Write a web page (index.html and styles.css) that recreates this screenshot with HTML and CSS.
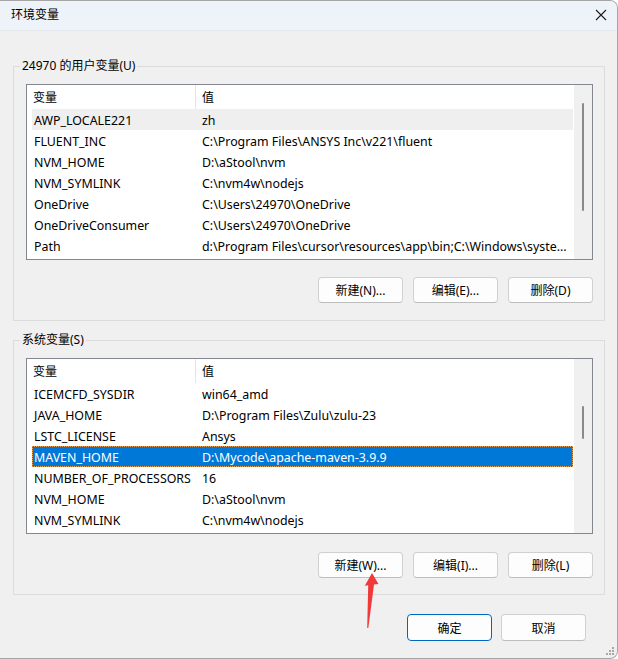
FILE: index.html
```html
<!DOCTYPE html>
<html lang="zh-CN">
<head>
  <meta charset="UTF-8">
  <title>环境变量</title>
  <link rel="stylesheet" href="styles.css">
</head>
<body>

<div class="window">
  <div class="titlebar">
    <span class="title">环境变量</span>
    <svg class="close" width="12" height="12" viewBox="0 0 12 12">
      <path d="M1 1 L11 11 M11 1 L1 11" stroke="#1b1b1b" stroke-width="1.1" fill="none"/>
    </svg>
  </div>

  <fieldset class="group group-user">
    <legend>24970 的用户变量(U)</legend>
    <div class="listview">
      <div class="rows">
        <div class="header">
          <div class="col-name">变量</div>
          <div class="col-value">值</div>
        </div>
        <div class="row hot"><div class="col-name">AWP_LOCALE221</div><div class="col-value">zh</div></div>
        <div class="row"><div class="col-name">FLUENT_INC</div><div class="col-value">C:\Program Files\ANSYS Inc\v221\fluent</div></div>
        <div class="row"><div class="col-name">NVM_HOME</div><div class="col-value">D:\aStool\nvm</div></div>
        <div class="row"><div class="col-name">NVM_SYMLINK</div><div class="col-value">C:\nvm4w\nodejs</div></div>
        <div class="row"><div class="col-name">OneDrive</div><div class="col-value">C:\Users\24970\OneDrive</div></div>
        <div class="row"><div class="col-name">OneDriveConsumer</div><div class="col-value">C:\Users\24970\OneDrive</div></div>
        <div class="row"><div class="col-name">Path</div><div class="col-value">d:\Program Files\cursor\resources\app\bin;C:\Windows\syste...</div></div>
      </div>
      <div class="scrollbar"><div class="thumb thumb-user"></div></div>
    </div>
    <div class="buttons">
      <button class="btn">新建(N)...</button>
      <button class="btn">编辑(E)...</button>
      <button class="btn">删除(D)</button>
    </div>
  </fieldset>

  <fieldset class="group group-system">
    <legend>系统变量(S)</legend>
    <div class="listview">
      <div class="rows">
        <div class="header">
          <div class="col-name">变量</div>
          <div class="col-value">值</div>
        </div>
        <div class="row"><div class="col-name">ICEMCFD_SYSDIR</div><div class="col-value">win64_amd</div></div>
        <div class="row"><div class="col-name">JAVA_HOME</div><div class="col-value">D:\Program Files\Zulu\zulu-23</div></div>
        <div class="row"><div class="col-name">LSTC_LICENSE</div><div class="col-value">Ansys</div></div>
        <div class="row selected"><div class="col-name">MAVEN_HOME</div><div class="col-value">D:\Mycode\apache-maven-3.9.9</div></div>
        <div class="row"><div class="col-name">NUMBER_OF_PROCESSORS</div><div class="col-value">16</div></div>
        <div class="row"><div class="col-name">NVM_HOME</div><div class="col-value">D:\aStool\nvm</div></div>
        <div class="row"><div class="col-name">NVM_SYMLINK</div><div class="col-value">C:\nvm4w\nodejs</div></div>
      </div>
      <div class="scrollbar"><div class="thumb thumb-system"></div></div>
    </div>
    <div class="buttons">
      <button class="btn">新建(W)...</button>
      <button class="btn">编辑(I)...</button>
      <button class="btn">删除(L)</button>
    </div>
  </fieldset>

  <div class="dialog-buttons">
    <button class="btn btn-default">确定</button>
    <button class="btn">取消</button>
  </div>

  <!-- red annotation arrow over the screenshot -->
  <svg class="arrow" width="20" height="60" viewBox="360 570 20 60">
    <polygon points="372,573 378.5,584 374,584.5 368.3,628 367.2,628 368.2,585.2 364.8,585.8" fill="#f03a3a"/>
  </svg>

  <svg class="grip" width="10" height="10" viewBox="0 0 10 10">
    <rect x="7" y="1" width="2" height="2" fill="#a8a8a8"/>
    <rect x="4" y="4" width="2" height="2" fill="#a8a8a8"/>
    <rect x="7" y="4" width="2" height="2" fill="#a8a8a8"/>
    <rect x="1" y="7" width="2" height="2" fill="#a8a8a8"/>
    <rect x="4" y="7" width="2" height="2" fill="#a8a8a8"/>
    <rect x="7" y="7" width="2" height="2" fill="#a8a8a8"/>
  </svg>
</div>

</body>
</html>
```

FILE: styles.css
```css
* {
  box-sizing: border-box;
}

html, body {
  margin: 0;
  padding: 0;
  background: #ffffff;
}

body {
  font-family: "Noto Sans", "Noto Sans CJK SC", sans-serif;
  font-size: 12px;
  color: #000;
}

.window {
  position: relative;
  display: flex;
  flex-direction: column;
  width: 618px;
  height: 659px;
  background: #f0f0f0;
  border: 1px solid #a6a6a6;
  border-left: none;
  border-radius: 0 8px 8px 0;
  overflow: hidden;
}

.titlebar {
  display: flex;
  align-items: center;
  justify-content: space-between;
  height: 30px;
  flex: none;
  padding: 0 10px 0 11px;
  background: #eef3fa;
  border-bottom: 1px solid #e6e9ee;
}

.title {
  line-height: 16px;
  margin-top: -1px;
}

.close {
  margin-top: -1px;
}

/* group boxes */
.group {
  flex: none;
  min-width: 0;
  width: 592px;
  margin: 0 0 0 13px;
  border: 1px solid #dcdcdc;
  padding: 10px 11px 17px 12px;
}

.group legend {
  margin-left: -6px;
  padding: 0 2px;
  line-height: 16px;
}

.group-user {
  margin-top: 27px;
}

.group-system {
  margin-top: 11px;
  padding-bottom: 16px;
}

/* list view */
.listview {
  display: flex;
  height: 176px;
  background: #fff;
  border: 1px solid #828790;
  overflow: hidden;
}

.rows {
  flex: 1;
  min-width: 0;
}

.header,
.row {
  display: flex;
  height: 21px;
  align-items: center;
  white-space: nowrap;
}

.header {
  height: 24px;
}

.header .col-name {
  width: 169px;
  padding-left: 6px;
  border-right: 1px solid #e5e5e5;
  height: 100%;
  display: flex;
  align-items: center;
}

.header .col-value {
  padding-left: 6px;
}

.row {
  margin: 0 1px 0 5px;
  padding-top: 2px;
  font-size: 12.4px;
}

.row .col-name {
  width: 164px;
  padding-left: 2px;
  overflow: hidden;
}

.row .col-value {
  flex: 1;
  padding-left: 6px;
  overflow: hidden;
}

.row.hot {
  background: #efefef;
}

.row.selected {
  background: #0078d7;
  color: #fff;
  border: 1px dotted #e8a35a;
  padding-top: 1px;
}

.row.selected .col-name {
  width: 163px;
  padding-left: 1px;
}

.scrollbar {
  flex: none;
  width: 18px;
  display: flex;
  justify-content: center;
  background: #f0f0f0;
}

.thumb {
  width: 2px;
  border-radius: 1px;
  background: #8a8a8a;
}

.thumb-user {
  margin-top: 18px;
  height: 108px;
}

.thumb-system {
  margin-top: 47px;
  height: 33px;
}

/* buttons */
.buttons {
  display: flex;
  justify-content: flex-end;
  gap: 10px;
  margin-top: 17px;
}

.group-system .buttons {
  margin-top: 18px;
}

.btn {
  width: 85px;
  height: 26px;
  padding: 0;
  font: inherit;
  color: #000;
  background: #fdfdfd;
  border: 1px solid #d0d0d0;
  border-bottom-color: #bdbdbd;
  border-radius: 4px;
}

.dialog-buttons {
  display: flex;
  justify-content: flex-end;
  gap: 9px;
  margin: 19px 31px 0 0;
}

.dialog-buttons .btn {
  height: 27px;
}

.btn-default {
  border: 1px solid #0067c0;
}

.arrow {
  position: absolute;
  left: 360px;
  top: 569px;
}

.grip {
  position: absolute;
  right: 2px;
  bottom: 2px;
}
```
